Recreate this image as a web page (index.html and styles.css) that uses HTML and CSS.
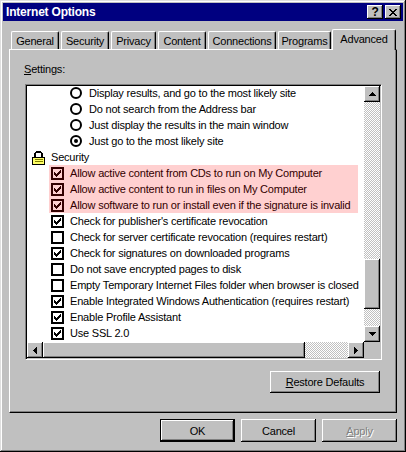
FILE: index.html
```html
<!DOCTYPE html>
<html lang="en">
<head>
  <meta charset="UTF-8" />
  <title>Internet Options</title>
  <link rel="stylesheet" href="styles.css">
</head>
<body>
  <svg class="defs" width="0" height="0">
    <symbol id="check" viewBox="0 0 9 9">
      <path d="M1 3h1v1h1v1h1v-1h1v-1h1v-1h1v-1h1v3h-1v1h-1v1h-1v1h-1v1h-1v-1h-1v-1h-1z" />
    </symbol>
    <symbol id="up" viewBox="0 0 7 4"><path d="M3 0h1v1h1v1h1v1h1v1h-7v-1h1v-1h1v-1h1z" /></symbol>
    <symbol id="down" viewBox="0 0 7 4"><path d="M0 0h7v1h-1v1h-1v1h-1v1h-1v-1h-1v-1h-1v-1h-1z" /></symbol>
    <symbol id="left" viewBox="0 0 4 7"><path d="M3 0h1v7h-1v-1h-1v-1h-1v-1h-1v-1h1v-1h1v-1h1z" /></symbol>
    <symbol id="right" viewBox="0 0 4 7"><path d="M0 0h1v1h1v1h1v1h1v1h-1v1h-1v1h-1v1h-1z" /></symbol>
  </svg>

  <div class="window">
    <!-- TITLE BAR -->
    <div class="titlebar">
      <span class="title">Internet Options</span>
      <div class="title-buttons">
        <span class="raised title-btn help">?</span>
        <span class="raised title-btn">
          <svg width="8" height="7" viewBox="0 0 8 7"><path d="M0 0h2v1h1v1h2v-1h1v-1h2v1h-1v1h-1v1h-1v1h1v1h1v1h1v1h-2v-1h-1v-1h-2v1h-1v1h-2v-1h1v-1h1v-1h1v-1h-1v-1h-1v-1h-1z" /></svg>
        </span>
      </div>
    </div>

    <!-- TABS -->
    <div class="tabs">
      <span class="tab tab-wide">General</span>
      <span class="tab tab-wide">Security</span>
      <span class="tab tab-privacy">Privacy</span>
      <span class="tab tab-wide">Content</span>
      <span class="tab tab-connections">Connections</span>
      <span class="tab tab-programs">Programs</span>
      <span class="tab tab-active">Advanced</span>
    </div>

    <div class="panel">
      <div class="settings-label"><u>S</u>ettings:</div>

      <div class="listbox">
        <div class="list-top">
          <div class="rows">
            <div class="row radio-row"><span class="radio"></span>Display results, and go to the most likely site</div>
            <div class="row radio-row"><span class="radio"></span>Do not search from the Address bar</div>
            <div class="row radio-row"><span class="radio"></span>Just display the results in the main window</div>
            <div class="row radio-row"><span class="radio selected"></span>Just go to the most likely site</div>
            <div class="row group-row">
              <svg class="lock" width="13" height="14" viewBox="0 0 13 14">
                <path d="M2 6v-4h1v-1h1v-1h5v1h1v1h1v4h-2v-4h-5v4z" fill="#000" />
                <path d="M0 6h13v8h-13z" fill="#000" />
                <path d="M1 7h11v6h-11z" fill="#ffff66" />
                <path d="M3 8h8v1h-8zM3 10h8v1h-8z" fill="#808000" />
              </svg>
              Security
            </div>
            <div class="row"><div class="item risky"><span class="checkbox"><svg width="9" height="9"><use href="#check" /></svg></span>Allow active content from CDs to run on My Computer</div></div>
            <div class="row"><div class="item risky"><span class="checkbox"><svg width="9" height="9"><use href="#check" /></svg></span>Allow active content to run in files on My Computer</div></div>
            <div class="row"><div class="item risky"><span class="checkbox"><svg width="9" height="9"><use href="#check" /></svg></span>Allow software to run or install even if the signature is invalid</div></div>
            <div class="row"><div class="item"><span class="checkbox"><svg width="9" height="9"><use href="#check" /></svg></span>Check for publisher's certificate revocation</div></div>
            <div class="row"><div class="item"><span class="checkbox"></span>Check for server certificate revocation (requires restart)</div></div>
            <div class="row"><div class="item"><span class="checkbox"><svg width="9" height="9"><use href="#check" /></svg></span>Check for signatures on downloaded programs</div></div>
            <div class="row"><div class="item"><span class="checkbox"></span>Do not save encrypted pages to disk</div></div>
            <div class="row"><div class="item"><span class="checkbox"></span>Empty Temporary Internet Files folder when browser is closed</div></div>
            <div class="row"><div class="item"><span class="checkbox"><svg width="9" height="9"><use href="#check" /></svg></span>Enable Integrated Windows Authentication (requires restart)</div></div>
            <div class="row"><div class="item"><span class="checkbox"><svg width="9" height="9"><use href="#check" /></svg></span>Enable Profile Assistant</div></div>
            <div class="row"><div class="item"><span class="checkbox"><svg width="9" height="9"><use href="#check" /></svg></span>Use SSL 2.0</div></div>
          </div>

          <div class="vscroll">
            <span class="raised arrow"><svg width="7" height="4"><use href="#up" /></svg></span>
            <span class="track vtrack-a"></span>
            <span class="raised vthumb"></span>
            <span class="track"></span>
            <span class="raised arrow"><svg width="7" height="4"><use href="#down" /></svg></span>
          </div>
        </div>

        <div class="hscroll">
          <span class="raised arrow"><svg width="4" height="7"><use href="#left" /></svg></span>
          <span class="raised hthumb"></span>
          <span class="track"></span>
          <span class="raised arrow"><svg width="4" height="7"><use href="#right" /></svg></span>
          <span class="corner"></span>
        </div>
      </div>

      <div class="panel-actions">
        <button class="raised btn restore"><u>R</u>estore Defaults</button>
      </div>
    </div>

    <!-- FOOTER -->
    <div class="footer">
      <button class="raised btn default">OK</button>
      <button class="raised btn">Cancel</button>
      <button class="raised btn disabled"><u>A</u>pply</button>
    </div>
  </div>
</body>
</html>
```

FILE: styles.css
```css
* {
  box-sizing: border-box;
}
html, body {
  margin: 0;
  padding: 0;
  background: #c0c0c0;
}
body {
  font-family: "Liberation Sans", Arial, sans-serif;
  font-size: 11px;
  letter-spacing: -0.2px;
  color: #000;
}
.defs {
  position: absolute;
}
svg {
  display: block;
  flex: none;
  shape-rendering: crispEdges;
}

.window {
  width: 406px;
  height: 452px;
  padding: 3px;
  background: #c0c0c0;
  box-shadow: inset -1px -1px 0 #000, inset 1px 1px 0 #dfdfdf, inset -2px -2px 0 #808080, inset 2px 2px 0 #fff;
}

.raised {
  background: #c0c0c0;
  box-shadow: inset -1px -1px 0 #000, inset 1px 1px 0 #fff, inset -2px -2px 0 #808080;
}

/* title bar */
.titlebar {
  display: flex;
  justify-content: space-between;
  align-items: center;
  width: 400px;
  height: 18px;
  padding: 0 2px 0 3px;
  background: #000080;
}
.title {
  color: #fff;
  font-weight: bold;
  font-size: 12px;
}
.title-buttons {
  display: flex;
  gap: 2px;
}
.title-btn {
  display: flex;
  justify-content: center;
  align-items: center;
  width: 16px;
  height: 14px;
}
.help {
  font-weight: bold;
  font-size: 12px;
}

/* tabs */
.tabs {
  display: flex;
  align-items: flex-end;
  position: relative;
  z-index: 1;
  height: 20px;
  margin: 8px 0 0 6px;
  padding-left: 2px;
}
.tab {
  display: flex;
  justify-content: center;
  align-items: center;
  height: 18px;
  margin-right: 2px;
  border-top: 1px solid #fff;
  border-left: 1px solid #fff;
  border-right: 1px solid #000;
  border-radius: 2px 2px 0 0;
  background: #c0c0c0;
  box-shadow: inset -1px 0 0 #808080;
}
.tab-wide {
  width: 48px;
}
.tab-privacy {
  width: 45px;
}
.tab-connections {
  width: 68px;
}
.tab-programs {
  width: 53px;
  margin-right: 1px;
}
.tab-active {
  width: 64px;
  height: 21px;
  margin-right: 0;
  margin-bottom: -1px;
  padding-bottom: 3px;
}

/* panel */
.panel {
  width: 388px;
  height: 364px;
  margin-left: 6px;
  padding: 0 16px 0 15px;
  border-top: 1px solid #fff;
  border-left: 1px solid #fff;
  border-right: 1px solid #000;
  border-bottom: 1px solid #000;
  box-shadow: inset -1px -1px 0 #808080;
}
.settings-label {
  height: 34px;
  padding-top: 12px;
  line-height: 14px;
  margin-left: -1px;
}

/* settings list */
.listbox {
  width: 357px;
  height: 276px;
  border-top: 1px solid #808080;
  border-left: 1px solid #808080;
  border-right: 1px solid #fff;
  border-bottom: 1px solid #fff;
  background: #fff;
  box-shadow: inset 1px 1px 0 #000, inset -1px -1px 0 #c0c0c0;
  padding: 1px;
}
.list-top {
  display: flex;
  height: 256px;
}
.rows {
  flex: 1;
  margin-top: -1px;
  overflow: hidden;
}
.row {
  display: flex;
  align-items: center;
  height: 16px;
  white-space: nowrap;
}
.radio-row {
  gap: 7px;
  padding-left: 43px;
}
.group-row {
  gap: 6px;
  padding-left: 5px;
}
.lock {
  margin-top: 2px;
}
.item {
  display: flex;
  align-items: center;
  gap: 6px;
  width: 309px;
  height: 16px;
  margin-left: 22px;
  padding-left: 2px;
}
.risky {
  background: #ffd0d0;
  color: #300;
}
.radio {
  display: block;
  flex: none;
  position: relative;
  width: 12px;
  height: 12px;
  border: 2px solid #000;
  border-radius: 50%;
  background: #fff;
}
.radio.selected::after {
  content: "";
  position: absolute;
  top: 2px;
  left: 2px;
  width: 4px;
  height: 4px;
  border-radius: 50%;
  background: #000;
}
.checkbox {
  display: flex;
  flex: none;
  justify-content: center;
  align-items: center;
  width: 13px;
  height: 13px;
  border: 2px solid currentColor;
}
.checkbox svg {
  fill: currentColor;
}

/* scrollbars */
.track {
  flex: 1;
  background: repeating-conic-gradient(#c0c0c0 0 25%, #fff 0 50%) 0 0 / 2px 2px;
}
.arrow {
  display: flex;
  flex: none;
  justify-content: center;
  align-items: center;
  width: 16px;
  height: 16px;
}
.vscroll {
  display: flex;
  flex-direction: column;
  width: 16px;
}
.vtrack-a {
  flex: none;
  height: 157px;
}
.vthumb {
  height: 50px;
}
.hscroll {
  display: flex;
  height: 16px;
}
.hthumb {
  flex: none;
  width: 262px;
}
.corner {
  width: 16px;
  background: #c0c0c0;
}

/* buttons */
.btn {
  width: 75px;
  height: 23px;
  padding: 0;
  border: none;
  font: inherit;
  letter-spacing: inherit;
  color: #000;
}
.panel-actions {
  display: flex;
  justify-content: flex-end;
  margin-top: 11px;
}
.restore {
  width: 110px;
  height: 22px;
}
.footer {
  display: flex;
  justify-content: flex-end;
  gap: 6px;
  margin-top: 6px;
  padding-right: 6px;
}
.default {
  outline: 1px solid #000;
  outline-offset: -1px;
  box-shadow: inset -2px -2px 0 #000, inset 2px 2px 0 #fff, inset -3px -3px 0 #808080;
}
.disabled {
  color: #808080;
  text-shadow: 1px 1px 0 #fff;
}
```
